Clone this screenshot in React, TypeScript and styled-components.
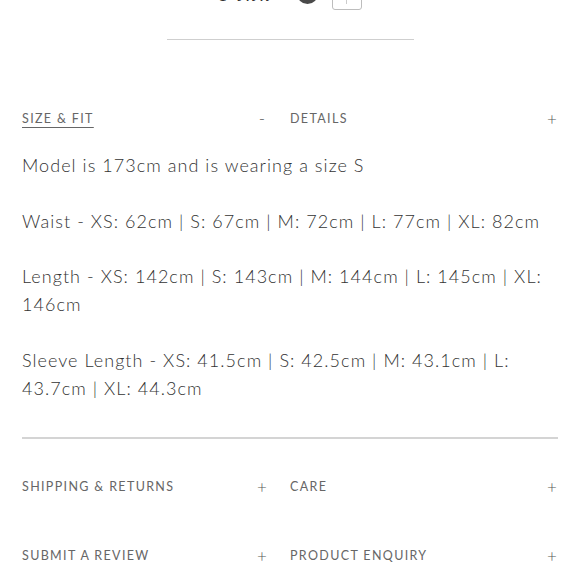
import React from "react";
import styled, { createGlobalStyle } from "styled-components";

const Global = createGlobalStyle`
  html, body { margin: 0; padding: 0; background: #fff; }
  body { font-family: Lato, "Open Sans", sans-serif; color: #333; overflow: hidden; }
  * { box-sizing: border-box; }
`;

const Page = styled.div`
  width: 580px;
  height: 580px;
  overflow: hidden;
  padding: 0 22px;
`;

const SwatchBar = styled.div`
  display: flex;
  align-items: flex-end;
  justify-content: center;
  gap: 14px;
  height: 10px;
  margin-left: 2px;
`;

const ColourName = styled.span`
  font-family: "Liberation Serif", serif;
  font-style: italic;
  font-size: 20px;
  letter-spacing: 4px;
  color: #333;
  line-height: 1;
  margin-bottom: 6px;
  margin-right: 10px;
`;

const Dot = styled.span`
  width: 21px;
  height: 21px;
  border-radius: 50%;
  background: #4a4a4a;
  margin-bottom: 6px;
`;

const Square = styled.span`
  width: 30px;
  height: 30px;
  border: 1.5px solid #bdbdbd;
  border-radius: 3px;
  display: flex;
  align-items: flex-end;
  justify-content: center;
  padding-bottom: 5px;
  &::after {
    content: "";
    width: 1px;
    height: 5px;
    background: #ccc;
  }
`;

const TopRule = styled.hr`
  width: 247px;
  margin: 29px auto 0;
  border: 0;
  border-top: 1.5px solid #cfcfcf;
`;

const Grid = styled.div<{ $top: number }>`
  display: grid;
  grid-template-columns: 246px 268px;
  column-gap: 22px;
  margin-top: ${(p) => p.$top}px;
`;

const Head = styled.div`
  display: flex;
  align-items: center;
  justify-content: space-between;
  height: 16px;
`;

const HeadLabel = styled.span<{ $active?: boolean }>`
  font-size: 12.5px;
  font-weight: 400;
  letter-spacing: 1.35px;
  color: #666;
  text-decoration: ${(p) => (p.$active ? "underline" : "none")};
  text-underline-offset: 4px;
  text-decoration-thickness: 1px;
`;

const Sign = styled.span`
  font-size: 17px;
  color: #555;
  width: 12px;
  text-align: center;
  font-weight: 300;
`;

const Body = styled.div`
  margin-top: 25px;
  font-size: 18px;
  font-weight: 300;
  line-height: 28px;
  letter-spacing: 1.05px;
  color: #333;
  width: 530px;
`;

const Para = styled.p`
  margin: 0 0 27.5px;
  &:last-child {
    margin-bottom: 0;
  }
`;

const Rule = styled.hr`
  border: 0;
  border-top: 2px solid #d4d4d4;
  margin: 35px 0 0;
`;

const topSections = [
  { label: "SIZE & FIT", open: true },
  { label: "DETAILS", open: false },
];

const paragraphs = [
  "Model is 173cm and is wearing a size S",
  "Waist - XS: 62cm | S: 67cm | M: 72cm | L: 77cm | XL: 82cm",
  "Length - XS: 142cm | S: 143cm | M: 144cm | L: 145cm | XL: 146cm",
  "Sleeve Length - XS: 41.5cm | S: 42.5cm | M: 43.1cm | L: 43.7cm | XL: 44.3cm",
];

const lowerRows = [
  { top: 40, items: ["SHIPPING & RETURNS", "CARE"] },
  { top: 53, items: ["SUBMIT A REVIEW", "PRODUCT ENQUIRY"] },
];

export default function App() {
  return (
    <Page>
      <Global />
      <SwatchBar>
        <ColourName>Pink</ColourName>
        <Dot />
        <Square />
      </SwatchBar>
      <TopRule />
      <Grid $top={70}>
        {topSections.map((s) => (
          <Head key={s.label}>
            <HeadLabel $active={s.open}>{s.label}</HeadLabel>
            <Sign>{s.open ? "-" : "+"}</Sign>
          </Head>
        ))}
      </Grid>
      <Body>
        {paragraphs.map((p) => (
          <Para key={p}>{p}</Para>
        ))}
      </Body>
      <Rule />
      {lowerRows.map((row) => (
        <Grid $top={row.top} key={row.items[0]}>
          {row.items.map((label) => (
            <Head key={label}>
              <HeadLabel>{label}</HeadLabel>
              <Sign>+</Sign>
            </Head>
          ))}
        </Grid>
      ))}
    </Page>
  );
}
